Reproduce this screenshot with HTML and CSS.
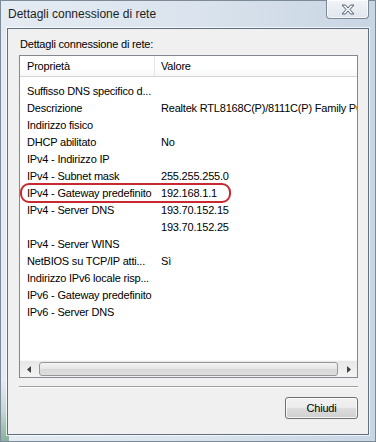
FILE: index.html
```html
<!DOCTYPE html>
<html>
<head>
<meta charset="utf-8">
<link rel="stylesheet" href="styles.css">
</head>
<body>
<div class="window">
  <div class="titlebar">
    <span class="title">Dettagli connessione di rete</span>
    <div class="close"><svg width="16" height="11" viewBox="0 0 16 11"><path d="M2 1 L5.5 1 L8 4 L10.5 1 L14 1 L10 5.5 L14 10 L10.5 10 L8 7 L5.5 10 L2 10 L6 5.5 Z" fill="#eef2f6" stroke="#5a6470" stroke-width="1"/></svg></div>
  </div>
  <div class="client">
    <div class="label">Dettagli connessione di rete:</div>
    <div class="list">
      <div class="header">
        <div class="hcell c1">Proprietà</div>
        <div class="hcell c2">Valore</div>
      </div>
      <div class="rows">
        <div class="row"><div class="c1">Suffisso DNS specifico d...</div><div class="c2"></div></div>
        <div class="row"><div class="c1">Descrizione</div><div class="c2">Realtek RTL8168C(P)/8111C(P) Family PCI-E</div></div>
        <div class="row"><div class="c1">Indirizzo fisico</div><div class="c2"></div></div>
        <div class="row"><div class="c1">DHCP abilitato</div><div class="c2">No</div></div>
        <div class="row"><div class="c1">IPv4 - Indirizzo IP</div><div class="c2"></div></div>
        <div class="row"><div class="c1">IPv4 - Subnet mask</div><div class="c2">255.255.255.0</div></div>
        <div class="row"><div class="c1">IPv4 - Gateway predefinito</div><div class="c2">192.168.1.1</div><div class="mark"></div></div>
        <div class="row"><div class="c1">IPv4 - Server DNS</div><div class="c2">193.70.152.15</div></div>
        <div class="row"><div class="c1"></div><div class="c2">193.70.152.25</div></div>
        <div class="row"><div class="c1">IPv4 - Server WINS</div><div class="c2"></div></div>
        <div class="row"><div class="c1">NetBIOS su TCP/IP atti...</div><div class="c2">Sì</div></div>
        <div class="row"><div class="c1">Indirizzo IPv6 locale risp...</div><div class="c2"></div></div>
        <div class="row"><div class="c1">IPv6 - Gateway predefinito</div><div class="c2"></div></div>
        <div class="row"><div class="c1">IPv6 - Server DNS</div><div class="c2"></div></div>
      </div>
      <div class="hscroll">
        <div class="arrow"><svg width="4" height="7" viewBox="0 0 4 7"><path d="M4 0 L0 3.5 L4 7 Z" fill="#404040"/></svg></div>
        <div class="thumb"></div>
        <div class="arrow"><svg width="4" height="7" viewBox="0 0 4 7"><path d="M0 0 L4 3.5 L0 7 Z" fill="#404040"/></svg></div>
      </div>
    </div>
    <div class="sep"></div>
    <div class="footer">
      <div class="button">Chiudi</div>
    </div>
  </div>
</div>
</body>
</html>
```
FILE: styles.css
```css
* { box-sizing: border-box; }
html, body { margin: 0; padding: 0; }
body {
  width: 376px;
  height: 442px;
  overflow: hidden;
  font-family: "Liberation Sans", Arial, sans-serif;
  font-size: 11px;
  letter-spacing: -0.2px;
  color: #000;
}
.window {
  width: 376px;
  height: 442px;
  display: flex;
  flex-direction: column;
  border: 1px solid #7d8a98;
  background:
    linear-gradient(to top, rgba(60,130,90,0.55) 0px, rgba(120,170,140,0.3) 30px, rgba(0,0,0,0) 60px) left bottom / 8px 100% no-repeat,
    linear-gradient(to right, #e4ebf2 0%, #dbe4ee 50%, #c8d5e3 100%);
  padding: 0 6px 6px 6px;
}
.titlebar {
  height: 27px;
  position: relative;
  display: flex;
  align-items: center;
  padding-left: 1px;
}
.title {
  font-size: 12px;
  letter-spacing: 0;
  color: #1e1e1e;
  margin-top: -1px;
}
.close {
  position: absolute;
  right: 0px;
  top: -1px;
  width: 43px;
  height: 19px;
  border: 1px solid #7d8896;
  border-top: none;
  border-radius: 0 0 4px 4px;
  background: linear-gradient(#f1f4f7, #dfe6ee);
  box-shadow: inset 0 0 0 1px rgba(255,255,255,0.7);
  display: flex;
  align-items: center;
  justify-content: center;
}
.client {
  flex: 1;
  background: #f0f0f0;
  border: 1px solid #5f6f80;
  box-shadow: 0 0 0 1px rgba(255,255,255,0.7);
  display: flex;
  flex-direction: column;
  padding: 9px 10px 0 11px;
}
.label {
  height: 17px;
  padding-left: 1px;
  font-size: 11px;
}
.list {
  height: 323px;
  background: #fff;
  border: 1px solid #828790;
  display: flex;
  flex-direction: column;
  overflow: hidden;
}
.header {
  height: 21px;
  display: flex;
  background: linear-gradient(#ffffff 0%, #ffffff 60%, #f6f7f8 100%);
  border-bottom: 1px solid #d5d5d5;
  flex: none;
}
.hcell {
  display: flex;
  align-items: center;
}
.header .c1 { border-right: 1px solid #e3e5e8; }
.c1 {
  width: 135px;
  flex: none;
  padding-left: 7px;
  white-space: nowrap;
  overflow: hidden;
}
.c2 {
  padding-left: 6px;
  white-space: nowrap;
  overflow: hidden;
  flex: 1;
}
.rows {
  flex: 1;
  padding-top: 5px;
}
.row {
  height: 17px;
  display: flex;
  align-items: center;
  position: relative;
}
.mark {
  position: absolute;
  left: 0px;
  top: -1px;
  width: 211px;
  height: 20px;
  border: 2px solid #c8282f;
  border-radius: 9px;
}
.hscroll {
  height: 17px;
  flex: none;
  display: flex;
  background: linear-gradient(#e8e8e8, #f4f4f4);
  border-top: 1px solid #f8f8f8;
}
.arrow {
  width: 17px;
  display: flex;
  align-items: center;
  justify-content: center;
}
.thumb {
  flex: 1;
  margin: 1px 2px;
  border: 1px solid #979797;
  border-radius: 3px;
  background: linear-gradient(#f4f4f4, #e6e6e6 50%, #d9d9d9 50%, #dedede);
}
.sep {
  margin-top: 8px;
  height: 2px;
  border-top: 1px solid #a0a0a0;
  border-bottom: 1px solid #ffffff;
}
.footer {
  display: flex;
  justify-content: flex-end;
  padding-top: 9px;
  padding-right: 0px;
}
.button {
  width: 73px;
  height: 22px;
  border: 1px solid #707070;
  border-radius: 3px;
  background: linear-gradient(#f2f2f2 0%, #ebebeb 50%, #dddddd 50%, #cfcfcf 100%);
  box-shadow: inset 0 0 0 1px rgba(255,255,255,0.8);
  display: flex;
  align-items: center;
  justify-content: center;
  font-size: 11px;
}
```
